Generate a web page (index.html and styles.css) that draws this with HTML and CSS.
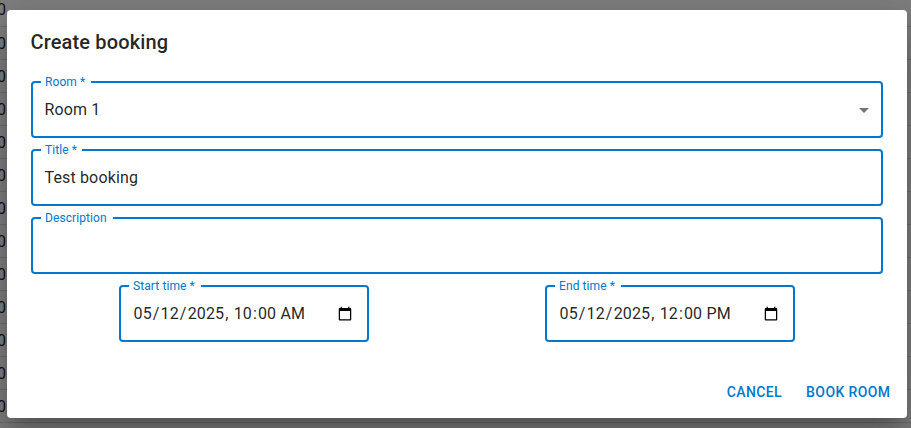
FILE: index.html
```html
<!DOCTYPE html>
<html lang="en">
<head>
<meta charset="utf-8">
<title>Create booking</title>
<link rel="stylesheet" href="styles.css">
</head>
<body>
<div class="calendar">
  <div class="slot first">0</div><div class="slot">0</div><div class="slot">0</div><div class="slot">0</div><div class="slot">0</div><div class="slot">0</div><div class="slot">0</div><div class="slot">0</div><div class="slot">0</div><div class="slot">0</div><div class="slot">0</div><div class="slot">0</div><div class="slot">0</div><div class="slot"></div>
</div>
<div class="backdrop">
  <main class="dialog">
    <h2 class="heading">Create booking</h2>
    <div class="fields">
      <fieldset class="field">
        <legend class="legend room">Room *</legend>
        <span class="value">Room 1</span>
        <svg class="arrow" viewBox="0 0 24 24"><path d="M7 10l5 5 5-5z"/></svg>
      </fieldset>
      <fieldset class="field">
        <legend class="legend title">Title *</legend>
        <span class="value">Test booking</span>
      </fieldset>
      <fieldset class="field">
        <legend class="legend description">Description</legend>
      </fieldset>
      <div class="times">
        <fieldset class="field time">
          <legend class="legend start">Start time *</legend>
          <input class="date" type="datetime-local" value="2025-05-12T10:00">
        </fieldset>
        <fieldset class="field time">
          <legend class="legend end">End time *</legend>
          <input class="date" type="datetime-local" value="2025-05-12T12:00">
        </fieldset>
      </div>
    </div>
    <div class="actions">
      <button class="action">Cancel</button>
      <button class="action">Book room</button>
    </div>
  </main>
</div>
</body>
</html>
```
FILE: styles.css
```css
* { box-sizing: border-box; }
body {
  margin: 0;
  height: 428px;
  overflow: hidden;
  font-family: Roboto, sans-serif;
  color: rgba(0, 0, 0, .87);
  background: #fff;
}
.calendar { height: 428px; overflow: hidden; }
.slot {
  height: 33px;
  border-bottom: 1px solid #ddd;
  font-size: 16px;
  line-height: 33px;
  text-indent: -3px;
}
.slot.first { height: 27px; line-height: 20px; }
.backdrop {
  position: absolute;
  inset: 0;
  overflow: hidden;
  padding: 10px 4px 10px 7px;
  background: rgba(0, 0, 0, .5);
}
.dialog {
  height: 408px;
  display: flex;
  flex-direction: column;
  border-radius: 4px;
  background: #fff;
  box-shadow: 0 11px 15px -7px rgba(0, 0, 0, .2), 0 24px 38px 3px rgba(0, 0, 0, .14), 0 9px 46px 8px rgba(0, 0, 0, .12);
}
.heading {
  margin: 0;
  padding: 16px 23.5px;
  font-size: 20px;
  font-weight: 500;
  line-height: 32px;
  letter-spacing: .15px;
}
.fields {
  display: flex;
  flex-direction: column;
  gap: 6px;
  padding: 2px 24px 0;
}
.field {
  width: 100%;
  min-width: 0;
  height: 62px;
  margin: 0;
  padding: 10px 5px 0 8px;
  border: 2px solid #0078d0;
  border-radius: 4px;
}
.legend {
  height: 12px;
  padding: 0 0 0 4px;
  font-size: 12px;
  line-height: 12px;
  letter-spacing: .09px;
  white-space: nowrap;
  color: #0078d0;
}
.room { width: 50px; }
.title { width: 41px; }
.description { width: 72px; }
.start { width: 72px; }
.end { width: 66px; }
.value {
  float: left;
  padding-left: 3.500px;
  font-size: 16px;
  line-height: 23px;
  letter-spacing: .15px;
}
.arrow {
  float: right;
  width: 24px;
  height: 24px;
  fill: #757575;
}
.times { display: grid; grid-template-columns: 1fr 1fr; justify-items: center; }
.time { width: 250px; }
.date {
  display: block;
  width: 222px;
  height: 23px;
  margin: 0 0 0 3.500px;
  padding: 0;
  border: 0;
  outline: 0;
  background: none;
  color: inherit;
  font: 16px/23px Roboto, sans-serif;
  letter-spacing: .15px;
}
.actions {
  margin-top: auto;
  display: flex;
  justify-content: flex-end;
  gap: 8px;
  padding: 8px 8.500px;
}
.action {
  height: 36px;
  padding: 0 8px;
  border: 0;
  background: none;
  color: #0078d0;
  font: 500 14px/24px Roboto, sans-serif;
  letter-spacing: .4px;
  text-transform: uppercase;
}
```
